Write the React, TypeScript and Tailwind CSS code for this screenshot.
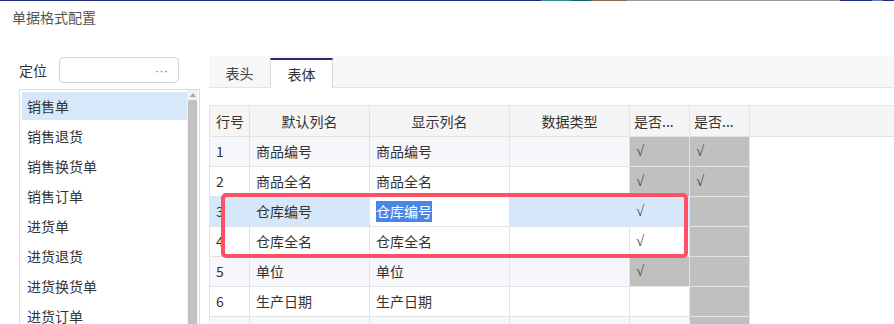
const listItems = ['销售单', '销售退货', '销售换货单', '销售订单', '进货单', '进货退货', '进货换货单', '进货订单', '进货换货单'];

type Row = {
  no: string;
  def: string;
  show: string;
  c1: string;
  c2: string;
  bg: string;
  c1bg: string;
  editing?: boolean;
};

const rows: Row[] = [
  { no: '1', def: '商品编号', show: '商品编号', c1: '√', c2: '√', bg: 'bg-[#f6f7fb]', c1bg: 'bg-[#c0c0c0]' },
  { no: '2', def: '商品全名', show: '商品全名', c1: '√', c2: '√', bg: 'bg-white', c1bg: 'bg-[#c0c0c0]' },
  { no: '3', def: '仓库编号', show: '仓库编号', c1: '√', c2: '', bg: 'bg-[#d5e8fb]', c1bg: 'bg-[#d5e8fb]', editing: true },
  { no: '4', def: '仓库全名', show: '仓库全名', c1: '√', c2: '', bg: 'bg-white', c1bg: 'bg-white' },
  { no: '5', def: '单位', show: '单位', c1: '√', c2: '', bg: 'bg-[#f6f7fb]', c1bg: 'bg-[#c0c0c0]' },
  { no: '6', def: '生产日期', show: '生产日期', c1: '', c2: '', bg: 'bg-white', c1bg: 'bg-white' },
  { no: '', def: '', show: '', c1: '', c2: '', bg: 'bg-[#f6f7fb]', c1bg: 'bg-[#f6f7fb]' },
];

function TopLine() {
  return (
    <div className="flex h-px w-full">
      <div className="w-[541px] bg-[#1f2a78]" />
      <div className="w-[30px] bg-[#2b8c9a]" />
      <div className="w-[20px] bg-[#1c5f6a]" />
      <div className="w-[36px] bg-[#8a6a4a]" />
      <div className="w-[213px] bg-[#9a9a9a]" />
      <div className="w-[32px] bg-[#1f2a78]" />
      <div className="w-[11px] bg-[#6b7bb0]" />
      <div className="flex-1 bg-[#1f2a78]" />
    </div>
  );
}

function LeftPanel() {
  return (
    <div className="w-[209px] shrink-0 pt-[23px]">
      <div className="flex h-[26px] items-center pl-[19px]">
        <span className="w-[40px] text-[14px] text-[#333]">定位</span>
        <div className="flex h-[26px] w-[120px] items-center justify-end rounded-[4px] border border-[#d4d4d4] pr-[10px]">
          <span className="font-['Liberation_Sans',sans-serif] text-[13px] leading-none text-[#777]">···</span>
        </div>
      </div>
      <div className="ml-[19px] mt-[6px] flex h-[240px] w-[181px] border border-[#dcdcdc]">
        <div className="flex w-[167px] flex-col gap-[2px] pl-[2px] pt-[2px]">
          {listItems.map((item, i) => (
            <div
              key={i}
              className={`flex h-[28px] shrink-0 items-center pl-[5px] text-[14px] text-[#333] ${i === 0 ? 'bg-[#d6e8fa]' : ''}`}
            >
              {item}
            </div>
          ))}
        </div>
        <div className="flex w-[11px] flex-col items-center bg-[#f1f1f1] pt-[3px]">
          <div className="h-0 w-0 border-x-[3px] border-b-[4px] border-x-transparent border-b-[#a3a3a3]" />
          <div className="mt-[3px] w-[9px] flex-1 rounded-[2px] bg-[#c1c1c1]" />
        </div>
      </div>
    </div>
  );
}

const cols = 'grid grid-cols-[40px_120px_140px_120px_60px_60px]';
const cell = 'flex items-center border-r border-b border-[#e3e3e3] px-[6px] text-[14px] text-[#333] overflow-hidden whitespace-nowrap';
const check = "font-['Liberation_Serif',serif] text-[15px] text-[#444]";

function Table() {
  return (
    <div className="border-l border-[#e3e3e3]">
      <div className="flex h-[32px] border-y border-[#e3e3e3] bg-[#f5f5f5]">
        <div className={`${cols} h-full`}>
          <div className="flex items-center whitespace-nowrap border-r border-[#e3e3e3] pl-[6px] text-[14px] text-[#333]">行号</div>
          <div className="flex items-center justify-center border-r border-[#e3e3e3] text-[14px] text-[#333]">默认列名</div>
          <div className="flex items-center justify-center border-r border-[#e3e3e3] text-[14px] text-[#333]">显示列名</div>
          <div className="flex items-center justify-center border-r border-[#e3e3e3] text-[14px] text-[#333]">数据类型</div>
          <div className="flex items-center whitespace-nowrap border-r border-[#e3e3e3] px-[4px] text-[14px] text-[#333]">是否...</div>
          <div className="flex items-center whitespace-nowrap border-r border-[#e3e3e3] px-[4px] text-[14px] text-[#333]">是否...</div>
        </div>
      </div>
      {rows.map((r, i) => (
        <div key={i} className={`${cols} h-[30px]`}>
          <div className={`${cell} ${r.bg}`}>{r.no}</div>
          <div className={`${cell} ${r.bg}`}>{r.def}</div>
          <div className={`${cell} ${r.editing ? 'bg-white' : r.bg}`}>
            {r.editing ? <span className="bg-[#4a86e8] text-white">{r.show}</span> : r.show}
          </div>
          <div className={`${cell} ${r.bg}`} />
          <div className={`${cell} ${r.c1bg}`}>
            <span className={check}>{r.c1}</span>
          </div>
          <div className={`${cell} bg-[#c0c0c0]`}>
            <span className={check}>{r.c2}</span>
          </div>
        </div>
      ))}
    </div>
  );
}

function RightPanel() {
  return (
    <div className="flex-1 pt-[22px]">
      <div className="flex h-[32px] border-b border-[#e4e4e4] bg-[#f7f7f7]">
        <div className="flex w-[61px] items-center justify-center pt-[3px] text-[14px] text-[#444]">表头</div>
        <div className="-mb-px flex h-[30px] w-[63px] items-center justify-center self-end border-x border-t-2 border-[#dcdcdc] border-t-[#262f6d] bg-white text-[14px] text-[#333]">
          表体
        </div>
      </div>
      <div className="h-[17px]" />
      <Table />
    </div>
  );
}

export default function App() {
  return (
    <div
      className="relative h-[324px] w-[894px] overflow-hidden bg-white"
      style={{ fontFamily: '"Microsoft YaHei", "Noto Sans CJK SC", "Noto Sans", sans-serif' }}
    >
      <TopLine />
      <div className="flex h-[33px] items-center pl-[12px] text-[14px] text-[#555]">单据格式配置</div>
      <div className="flex">
        <LeftPanel />
        <RightPanel />
      </div>
      <div className="absolute left-[221px] top-[193px] h-[65px] w-[467px] rounded-[5px] border-4 border-[#ff5066]" />
    </div>
  );
}
